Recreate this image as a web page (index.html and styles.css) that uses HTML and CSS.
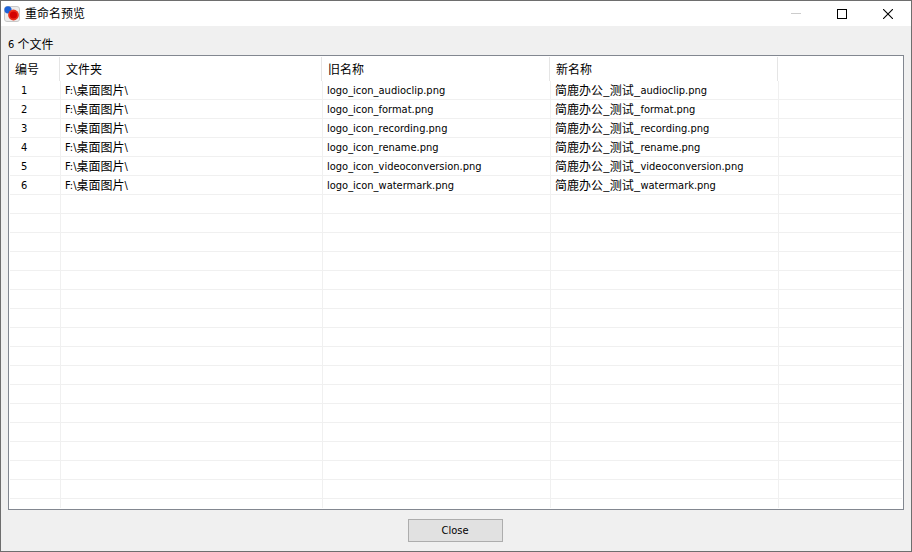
FILE: index.html
```html
<!DOCTYPE html>
<html lang="zh-CN">
<head>
    <meta charset="UTF-8">
    <meta name="viewport" content="width=device-width, initial-scale=1.0">
    <title>重命名预览</title>
    <link rel="stylesheet" href="styles.css">
</head>
<body>
    <div class="window">
        <header class="title-bar">
            <svg class="app-icon" width="16" height="16" viewBox="0 0 16 16">
                <rect x="0.5" y="0.5" width="15" height="15" rx="2.5" fill="#ececec" stroke="#c8c8c8"/>
                <circle cx="4" cy="3.8" r="3.6" fill="#1c62d8"/>
                <circle cx="9.5" cy="9" r="5.4" fill="#e8301c"/>
                <circle cx="9.5" cy="9" r="3.6" fill="#d40000"/>
            </svg>
            <h1 class="title">重命名预览</h1>
            <div class="window-buttons">
                <button class="window-btn" type="button" aria-label="最小化" disabled>
                    <svg width="10" height="10" viewBox="0 0 10 10"><path d="M0 4.5H10" stroke="#ccc"/></svg>
                </button>
                <button class="window-btn" type="button" aria-label="最大化">
                    <svg width="10" height="10" viewBox="0 0 10 10"><rect x="0.5" y="0.5" width="9" height="9" fill="none" stroke="#000"/></svg>
                </button>
                <button class="window-btn" type="button" aria-label="关闭">
                    <svg width="10" height="10" viewBox="0 0 10 10"><path d="M0 0L10 10M10 0L0 10" stroke="#000" stroke-width="1.1"/></svg>
                </button>
            </div>
        </header>

        <main class="content">
            <p class="count">6 <span class="zh">个文件</span></p>

            <div class="list-view">
                <table class="file-table">
                    <colgroup>
                        <col class="col-no">
                        <col class="col-folder">
                        <col class="col-name">
                        <col class="col-name">
                        <col>
                    </colgroup>
                    <thead>
                        <tr><th>编号</th><th>文件夹</th><th>旧名称</th><th>新名称</th><th></th></tr>
                    </thead>
                    <tbody>
                        <tr><td>1</td><td>F:\<span class="zh">桌面图片</span>\</td><td>logo_icon_audioclip.png</td><td><span class="zh">简鹿办公_测试_</span>audioclip.png</td><td></td></tr>
                        <tr><td>2</td><td>F:\<span class="zh">桌面图片</span>\</td><td>logo_icon_format.png</td><td><span class="zh">简鹿办公_测试_</span>format.png</td><td></td></tr>
                        <tr><td>3</td><td>F:\<span class="zh">桌面图片</span>\</td><td>logo_icon_recording.png</td><td><span class="zh">简鹿办公_测试_</span>recording.png</td><td></td></tr>
                        <tr><td>4</td><td>F:\<span class="zh">桌面图片</span>\</td><td>logo_icon_rename.png</td><td><span class="zh">简鹿办公_测试_</span>rename.png</td><td></td></tr>
                        <tr><td>5</td><td>F:\<span class="zh">桌面图片</span>\</td><td>logo_icon_videoconversion.png</td><td><span class="zh">简鹿办公_测试_</span>videoconversion.png</td><td></td></tr>
                        <tr><td>6</td><td>F:\<span class="zh">桌面图片</span>\</td><td>logo_icon_watermark.png</td><td><span class="zh">简鹿办公_测试_</span>watermark.png</td><td></td></tr>
                        <tr class="filler"><td></td><td></td><td></td><td></td><td></td></tr>
                    </tbody>
                </table>
            </div>
        </main>

        <footer class="footer">
            <button class="close-btn" type="button">Close</button>
        </footer>
    </div>
</body>
</html>
```
FILE: styles.css
```css
* {
    margin: 0;
    padding: 0;
    box-sizing: border-box;
}

body {
    font-family: "DejaVu Sans Condensed", "Noto Sans CJK SC", sans-serif;
    font-size: 11px;
    line-height: 16px;
    color: #000;
}

.window {
    display: flex;
    flex-direction: column;
    height: 100vh;
    background: #f0f0f0;
    border: 1px solid #6e6e6e;
}

/* 标题栏 */
.title-bar {
    display: flex;
    align-items: center;
    height: 25px;
    padding-left: 3px;
    background: #fff;
}

.title {
    flex: 1;
    margin-left: 5px;
    padding-bottom: 2px;
    font-family: "Noto Sans CJK SC", sans-serif;
    font-size: 12px;
    font-weight: normal;
}

.window-buttons {
    display: flex;
    height: 100%;
}

.window-btn {
    display: flex;
    align-items: center;
    justify-content: center;
    width: 46px;
    border: none;
    background: transparent;
}

.window-btn:not(:disabled):hover {
    background: #e5e5e5;
}

/* 内容 */
.content {
    flex: 1;
    display: flex;
    flex-direction: column;
    min-height: 0;
    padding: 11px 7px 0;
}

.count {
    height: 18px;
}

.zh {
    font-family: "Noto Sans CJK SC", sans-serif;
    font-size: 12px;
    line-height: 1;
    vertical-align: -1px;
}

.list-view {
    flex: 1;
    display: flex;
    min-height: 0;
    padding: 1px;
    background: #fff;
    border: 1px solid #828790;
    overflow: hidden;
}

.file-table {
    width: 100%;
    height: 100%;
    table-layout: fixed;
    border-collapse: separate;
    border-spacing: 0;
}

.col-no {
    width: 51px;
}

.col-folder {
    width: 262px;
}

.col-name {
    width: 228px;
}

.file-table th {
    height: 24px;
    padding-left: 5px;
    background: linear-gradient(#e5e5e5, #e5e5e5) no-repeat right 1px top / 1px 100%;
    font-family: "Noto Sans CJK SC", sans-serif;
    font-size: 12px;
    font-weight: normal;
    text-align: left;
}

.file-table td {
    height: 19px;
    padding: 2px 0 0 4px;
    border-right: 1px solid #f0f0f0;
    border-bottom: 1px solid #f0f0f0;
    white-space: nowrap;
}

.file-table td:first-child {
    padding-left: 11px;
}

.file-table th:last-child {
    background: none;
}

.file-table td:last-child {
    border-right: none;
}

/* 空白区域的网格线 */
.file-table .filler td {
    height: auto;
    border-bottom: none;
    background: repeating-linear-gradient(#fff 0 18px, #f0f0f0 18px 19px);
}

/* 底部 */
.footer {
    display: flex;
    justify-content: center;
    padding: 9px 2px 9px 0;
}

.close-btn {
    width: 95px;
    height: 23px;
    background: #e1e1e1;
    border: 1px solid #adadad;
    font: inherit;
}

.close-btn:hover {
    background: #e5f1fb;
    border-color: #0078d7;
}
```
